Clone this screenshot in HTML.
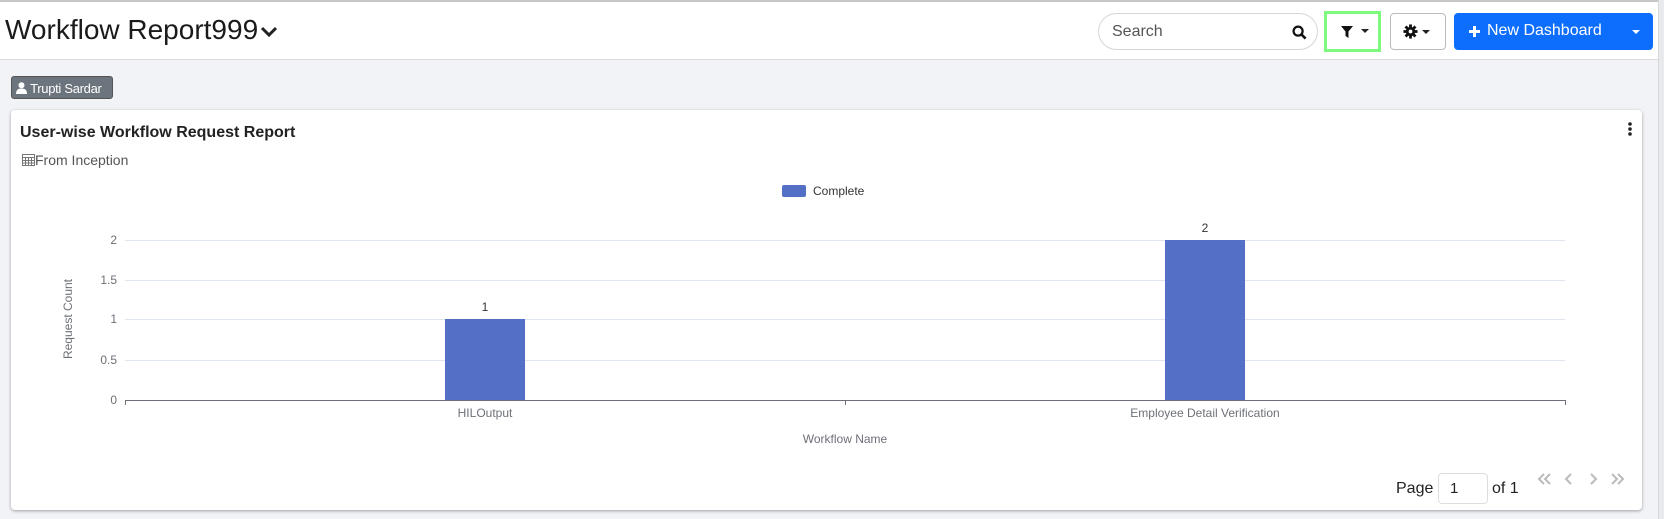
<!DOCTYPE html>
<html><head><meta charset="utf-8"><style>
*{box-sizing:border-box;margin:0;padding:0}
body{width:1664px;height:519px;background:#f2f3f7;font-family:"Liberation Sans",Arial,sans-serif;position:relative;overflow:hidden;color:#212529}
.hdr{position:absolute;left:0;top:0;width:1658px;height:60px;background:#fff;border-top:2px solid #c8c8c8;border-bottom:1px solid #dcdcdc}
.title{position:absolute;left:5px;top:12px;font-size:28px;color:#1a1a1a}
.search{position:absolute;left:1098px;top:11px;width:220px;height:37px;border:1px solid #d6d6d6;border-radius:19px;background:#fff;font-size:16px;color:#555;padding:9px 13px}
.btn{position:absolute;background:#fff;border:1px solid #bbb;border-radius:4px}
.caret{display:inline-block;border-left:4px solid transparent;border-right:4px solid transparent;border-top:4px solid #222;vertical-align:middle}
.nd{position:absolute;left:1454px;top:11px;width:199px;height:37px;background:#0d6efd;border-radius:4px;color:#fff;font-size:16px}
.rightbar{position:absolute;left:1658px;top:0;width:6px;height:519px;background:#e9eaee;border-left:1px solid #d8d8d8}
.badge{position:absolute;left:11px;top:76px;width:102px;height:23px;background:#6c757d;border:1px solid #555;border-radius:3px;color:#fff;font-size:13px;letter-spacing:-0.3px;padding:4px 0 0 4px;white-space:nowrap;overflow:hidden}
.card{position:absolute;left:11px;top:110px;width:1631px;height:400px;background:#fff;border-radius:4px;box-shadow:0 1px 3px rgba(0,0,0,.35)}
.ct{position:absolute;left:9px;top:14px;font-size:16px;font-weight:bold;color:#222}
.cs{position:absolute;left:11px;top:42px;font-size:14px;color:#555}
svg text{font-family:"Liberation Sans",Arial,sans-serif}
</style></head><body>
<div class="hdr">
 <div class="title">Workflow Report999<svg width="18" height="14" viewBox="0 0 18 14" style="margin-left:2px"><path d="M2 3l7 7 7-7" stroke="#222" stroke-width="3" fill="none"/></svg></div>
 <div class="search">Search<svg style="position:absolute;right:10px;top:11px" width="15" height="15" viewBox="0 0 16 16"><circle cx="6.5" cy="6.5" r="4.8" stroke="#111" stroke-width="2.4" fill="none"/><path d="M10 10l4.5 4.5" stroke="#111" stroke-width="2.8"/></svg></div>
 <div class="btn" style="left:1324px;top:9px;width:57px;height:41px;border:3px solid #7dfa7d;border-radius:0"><svg style="position:absolute;left:13px;top:11px" width="14" height="14" viewBox="0 0 14 14"><path d="M1 1h12l-4.5 5.5v6.5l-3-2v-4.5z" fill="#111"/></svg><span class="caret" style="position:absolute;left:34px;top:15px"></span></div>
 <div class="btn" style="left:1390px;top:11px;width:56px;height:37px"><svg style="position:absolute;left:12px;top:10px" width="15" height="15" viewBox="0 0 16 16"><g fill="#111"><circle cx="8" cy="8" r="5"/><rect x="6.5" y="0.5" width="3" height="15"/><rect x="0.5" y="6.5" width="15" height="3"/><rect x="6.5" y="0.5" width="3" height="15" transform="rotate(45 8 8)"/><rect x="6.5" y="0.5" width="3" height="15" transform="rotate(-45 8 8)"/></g><circle cx="8" cy="8" r="2" fill="#fff"/></svg><span class="caret" style="position:absolute;left:31px;top:16px"></span></div>
 <div class="nd"><svg style="position:absolute;left:14px;top:12px" width="13" height="13" viewBox="0 0 13 13"><path d="M6.5 1v11M1 6.5h11" stroke="#fff" stroke-width="3"/></svg><span style="position:absolute;left:33px;top:9px">New Dashboard</span><span class="caret" style="position:absolute;left:178px;top:17px;border-top-color:#fff"></span></div>
</div>
<div class="rightbar"></div>
<div class="badge"><svg width="11" height="12" viewBox="0 0 11 12" style="vertical-align:-1px"><circle cx="5.5" cy="3.2" r="3" fill="#fff"/><path d="M0 12c0-4 2-5.5 5.5-5.5S11 8 11 12z" fill="#fff"/></svg> Trupti Sardar</div>
<div class="card">
 <div class="ct">User-wise Workflow Request Report</div>
 <div class="cs"><svg width="13" height="13" viewBox="0 0 13 13" style="vertical-align:-1px"><rect x="0.5" y="1.5" width="12" height="11" fill="none" stroke="#777"/><path d="M0.5 4.5h12M3.5 4.5v8M6.5 4.5v8M9.5 4.5v8M0.5 7.5h12M0.5 10h12" stroke="#777"/></svg>From Inception</div>
 <svg style="position:absolute;right:10px;top:12px" width="4" height="14"><circle cx="2" cy="2" r="1.8" fill="#222"/><circle cx="2" cy="7" r="1.8" fill="#222"/><circle cx="2" cy="12" r="1.8" fill="#222"/></svg>
 <svg style="position:absolute;left:0;top:0" width="1631" height="400">
  <rect x="771" y="75" width="24" height="12" rx="2" fill="#5470c6"/>
  <text x="802" y="85" font-size="12" fill="#333">Complete</text>
  <g stroke="#e0e6f1"><path d="M114 130.5h1440M114 170.5h1440M114 209.5h1440M114 250.5h1440"/></g>
  <path d="M114 290.5h1440" stroke="#6e7079"/>
  <path d="M114.5 290v5M834.5 290v5M1554.5 290v5" stroke="#6e7079"/>
  <g font-size="12" fill="#6e7079" text-anchor="end"><text x="106" y="134">2</text><text x="106" y="174">1.5</text><text x="106" y="213">1</text><text x="106" y="254">0.5</text><text x="106" y="294">0</text></g>
  <rect x="434" y="209" width="80" height="81" fill="#5470c6"/>
  <rect x="1154" y="130" width="80" height="160" fill="#5470c6"/>
  <g font-size="12" fill="#333" text-anchor="middle"><text x="474" y="201">1</text><text x="1194" y="122">2</text></g>
  <g font-size="12" fill="#6e7079" text-anchor="middle"><text x="474" y="307">HILOutput</text><text x="1194" y="307">Employee Detail Verification</text><text x="834" y="333">Workflow Name</text></g>
  <text transform="translate(61 209) rotate(-90)" font-size="12" fill="#6e7079" text-anchor="middle">Request Count</text>
  <g stroke="#bbb" stroke-width="2" fill="none"><path d="M1533 364l-5 5 5 5M1539 364l-5 5 5 5M1560 364l-5 5 5 5M1580 364l5 5-5 5M1601 364l5 5-5 5M1607 364l5 5-5 5"/></g>
 </svg>
 <div style="position:absolute;left:1385px;top:370px;font-size:16px;color:#222">Page</div>
 <div style="position:absolute;left:1427px;top:363px;width:50px;height:31px;border:1px solid #ddd;border-radius:4px;font-size:15px;padding:6px 0 0 11px">1</div>
 <div style="position:absolute;left:1481px;top:370px;font-size:16px;color:#222">of 1</div>
</div>
</body></html>
